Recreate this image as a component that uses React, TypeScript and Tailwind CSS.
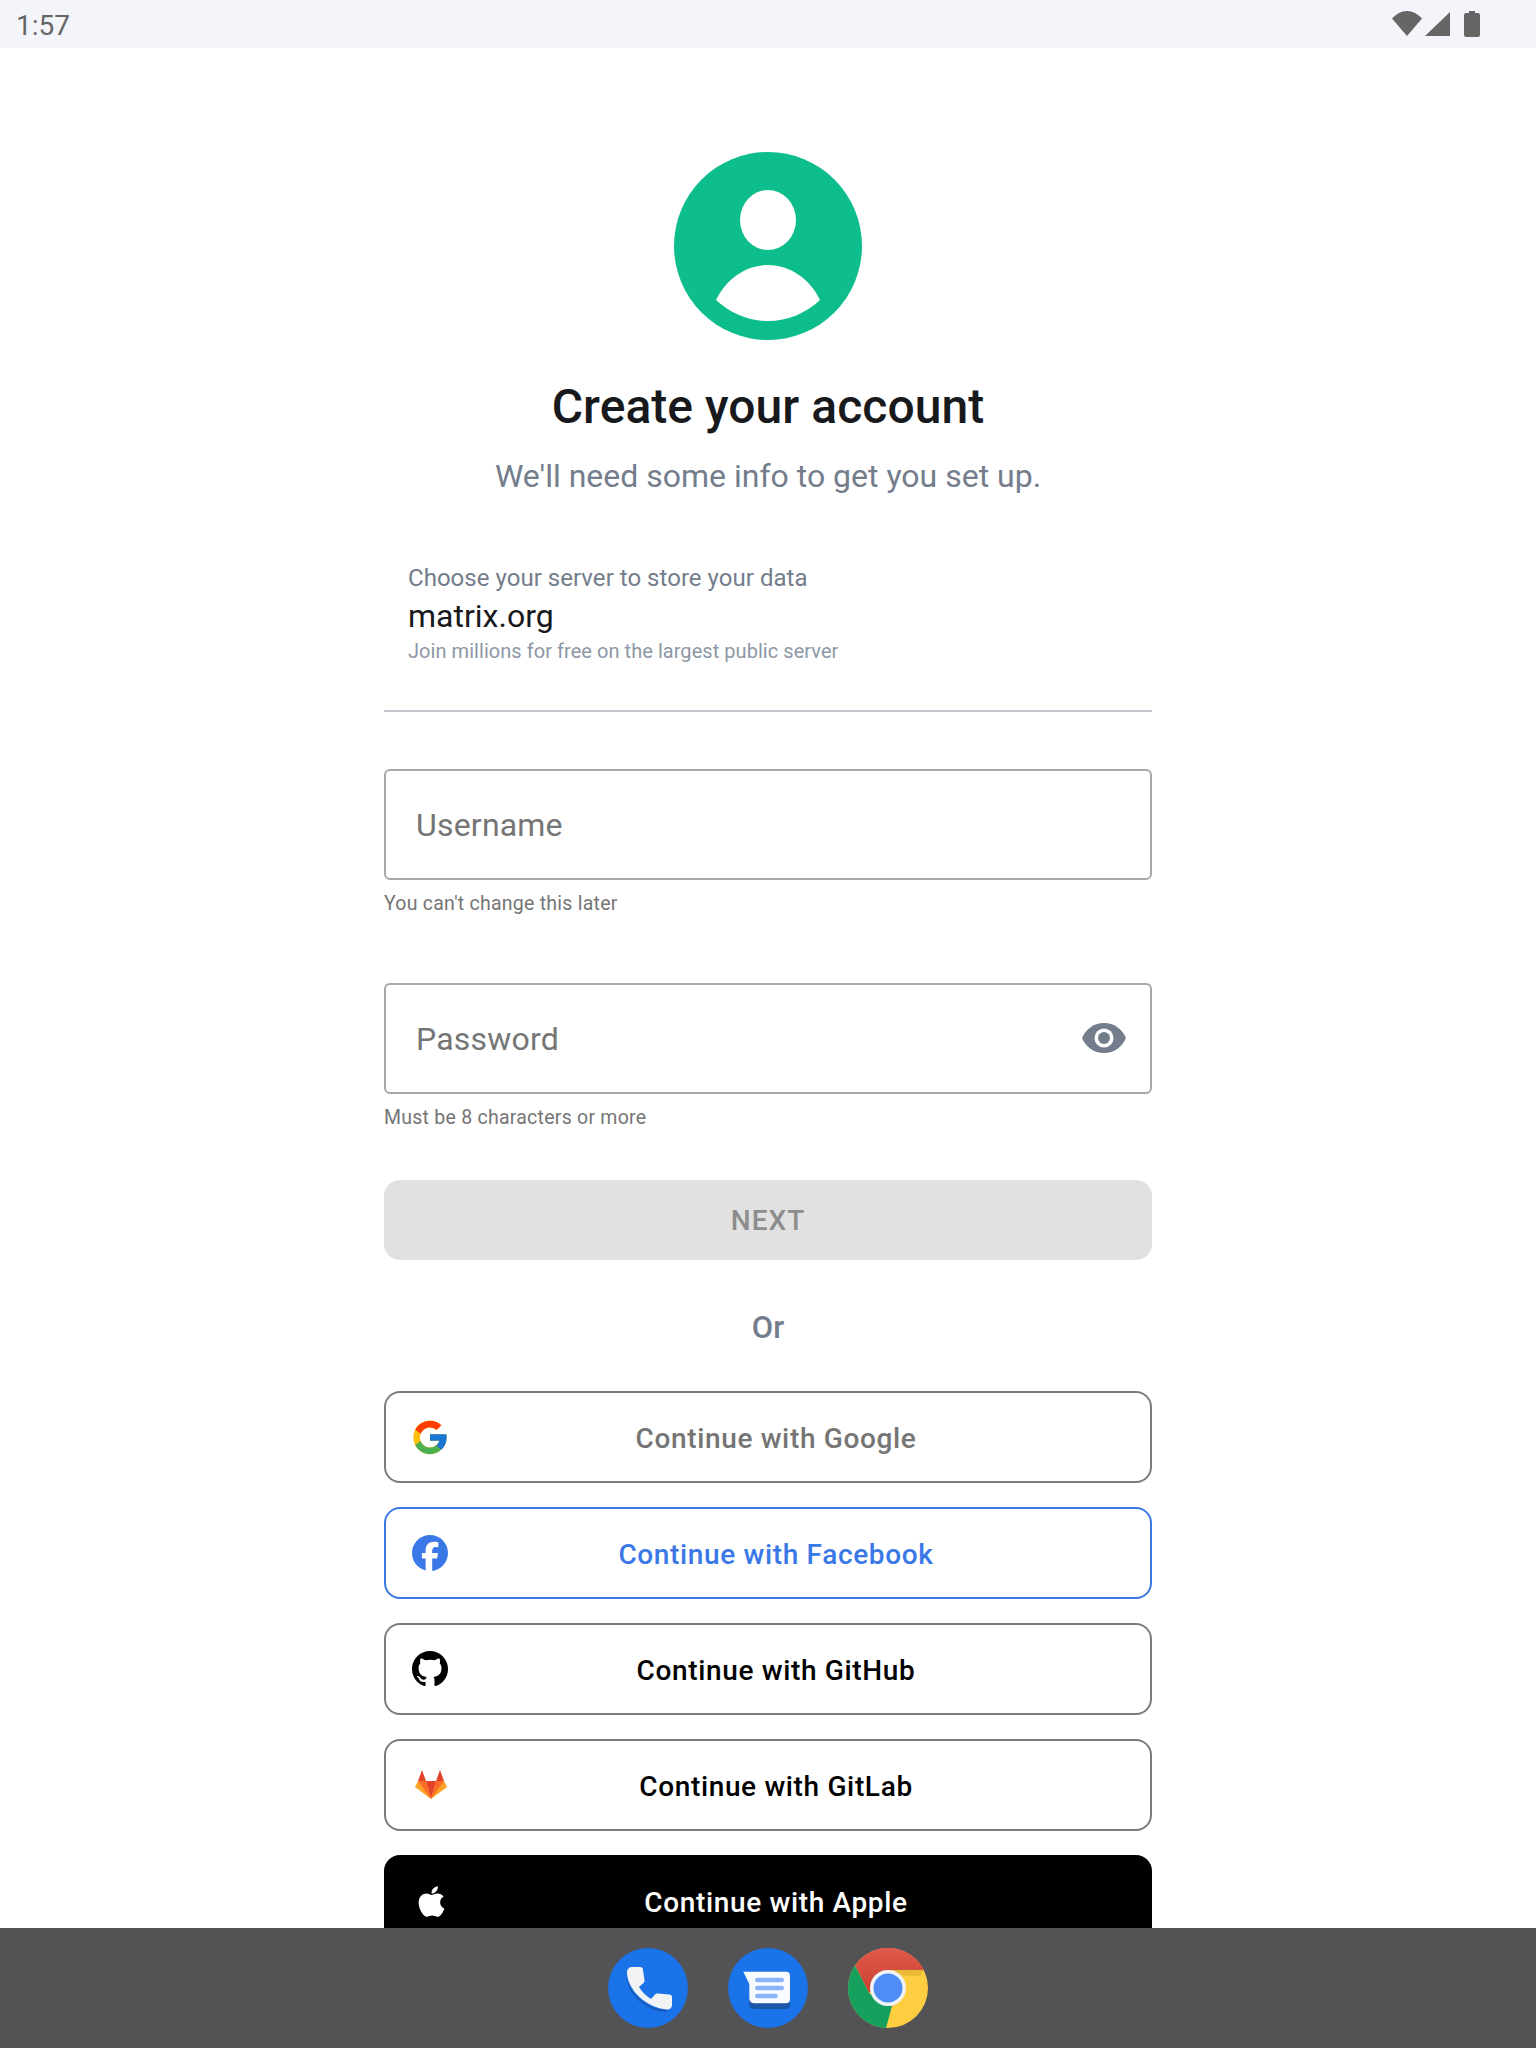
import { FaApple } from "react-icons/fa";
import { FcGoogle } from "react-icons/fc";
import { SiFacebook } from "react-icons/si";

function StatusBar() {
  return (
    <div className="flex h-[48px] shrink-0 items-center justify-between bg-[#f4f5fa] pl-[16px] pr-[56px] text-[#666666]">
      <span className="mt-[3px] text-[28px] leading-[45px]">1:57</span>
      <svg width="88" height="26" viewBox="0 0 88 26" fill="currentColor">
        <path d="M0 7.5C4 3 9.5 0 15 0s11 3 15 7.5L15 25Z" />
        <path d="M33 25 58 1v24Z" />
        <path d="M72 4a2 2 0 0 1 2-2h3V0h6v2h3a2 2 0 0 1 2 2v20a2 2 0 0 1-2 2H74a2 2 0 0 1-2-2Z" />
      </svg>
    </div>
  );
}

function Avatar() {
  return (
    <svg width="188" height="188" viewBox="0 0 188 188" className="shrink-0">
      <circle cx="94" cy="94" r="94" fill="#0dbd8b" />
      <ellipse cx="94" cy="68" rx="28" ry="30" fill="#fff" />
      <path d="M42 148C52 127 72 113 94 113s42 14 52 35c-14 13-32 21-52 21s-38-8-52-21Z" fill="#fff" />
    </svg>
  );
}

function GithubLogo() {
  return (
    <svg width="36" height="36" viewBox="0 0 16 16" fill="#000">
      <path d="M8 0C3.58 0 0 3.58 0 8c0 3.54 2.29 6.53 5.47 7.59.4.07.55-.17.55-.38 0-.19-.01-.82-.01-1.49-2.01.37-2.53-.49-2.69-.94-.09-.23-.48-.94-.82-1.13-.28-.15-.68-.52-.01-.53.63-.01 1.08.58 1.23.82.72 1.21 1.87.87 2.33.66.07-.52.28-.87.51-1.07-1.78-.2-3.64-.89-3.64-3.95 0-.87.31-1.59.82-2.15-.08-.2-.36-1.02.08-2.12 0 0 .67-.21 2.2.82.64-.18 1.32-.27 2-.27.68 0 1.36.09 2 .27 1.53-1.04 2.2-.82 2.2-.82.44 1.1.16 1.92.08 2.12.51.56.82 1.27.82 2.15 0 3.07-1.87 3.75-3.65 3.95.29.25.54.73.54 1.48 0 1.07-.01 1.93-.01 2.2 0 .21.15.46.55.38A8.013 8.013 0 0016 8c0-4.42-3.58-8-8-8z" />
    </svg>
  );
}

function GitlabLogo() {
  return (
    <svg width="32" height="30" viewBox="0 0 32 30" className="ml-[2px]">
      <path d="M16 29 0 17l3-6h8l5 18Z" fill="#fca326" />
      <path d="M16 29 32 17l-3-6h-8l-5 18Z" fill="#fca326" />
      <path d="M16 29 3 11h8l5 18Z" fill="#fc6d26" />
      <path d="M16 29 29 11h-8l-5 18Z" fill="#fc6d26" />
      <path d="M16 29 11 11h10l-5 18Z" fill="#e24329" />
      <path d="M3 11 7 0l4 11H3Z" fill="#e24329" />
      <path d="M29 11 25 0l-4 11h8Z" fill="#e24329" />
    </svg>
  );
}

function EyeIcon() {
  return (
    <svg width="44" height="30" viewBox="0 0 44 30" className="mb-[2px]">
      <path d="M22 0C12 0 4 6 0 15c4 9 12 15 22 15s18-6 22-15C40 6 32 0 22 0Z" fill="#737d8c" />
      <circle cx="22" cy="15" r="9.5" fill="#fff" />
      <circle cx="22" cy="15" r="6" fill="#737d8c" />
    </svg>
  );
}

function TextField({ label, helper, icon }: { label: string; helper: string; icon?: boolean }) {
  return (
    <div>
      <div className="flex h-[111px] items-center justify-between rounded-[6px] border-2 border-[#a8a8a8] pl-[30px] pr-[24px]">
        <span className="text-[32px] tracking-[0.2px] text-[#757575]">{label}</span>
        {icon && <EyeIcon />}
      </div>
      <p className="mt-[12px] text-[19.5px] leading-[24px] tracking-[0.25px] text-[#757575]">{helper}</p>
    </div>
  );
}

const providerBtn = "relative flex h-[92px] items-center justify-center rounded-[16px] border-2 text-[28px] font-medium tracking-[0.65px]";

function ProviderButton({ label, icon, className }: { label: string; icon: React.ReactNode; className: string }) {
  return (
    <div className={`${providerBtn} ${className}`}>
      <span className="absolute left-[24px] top-1/2 flex h-[40px] w-[40px] -translate-y-1/2 items-center justify-center">{icon}</span>
      <span className="pl-[16px] pt-[3px]">{label}</span>
    </div>
  );
}

function PhoneIcon() {
  const handset = "M19 24a5 5 0 0 1 5-5h8a3 3 0 0 1 3 3l1.500 10a3 3 0 0 1-1 3l-4.500 4c3 5 7 9 12 12l4-4.500a3 3 0 0 1 3-1l11 1a3 3 0 0 1 3 3v8a5 5 0 0 1-5 4C39 60 19 42 19 24Z";
  return (
    <svg width="80" height="80" viewBox="0 0 80 80">
      <circle cx="40" cy="40" r="40" fill="#1a73e8" />
      <path d="M19 26 C19 44 39 62 59 62 L59 64 C39 64 17 46 19 26Z" fill="#185abc" />
      <path d={handset} fill="#f1f3f4" />
    </svg>
  );
}

function MessagesIcon() {
  return (
    <svg width="80" height="80" viewBox="0 0 80 80">
      <circle cx="40" cy="40" r="40" fill="#1a73e8" />
      <path d="M21 40h41v17a4 4 0 0 1-4 4H26a5 5 0 0 1-5-5Z" fill="#1b56a8" />
      <path d="M21.300 36 15.300 23.700H58a4 4 0 0 1 4 4V51.300a4 4 0 0 1-4 4H26a5 5 0 0 1-4.700-4.700Z" fill="#f8fbff" />
      <rect x="27" y="29.700" width="29" height="4.600" rx="2.300" fill="#8ab4f8" />
      <rect x="27" y="37.700" width="29" height="4.600" rx="2.300" fill="#8ab4f8" />
      <rect x="27" y="45.700" width="22.700" height="4.600" rx="2.300" fill="#8ab4f8" />
    </svg>
  );
}

function ChromeIcon() {
  return (
    <svg width="80" height="80" viewBox="0 0 80 80">
      <defs>
        <linearGradient id="chrome-red" x1="0" y1="0" x2="0" y2="1">
          <stop offset="0" stopColor="#e05a4d" />
          <stop offset="1" stopColor="#c9402f" />
        </linearGradient>
      </defs>
      <circle cx="40" cy="40" r="40" fill="#ffcd40" />
      <path d="M40 22H76L72 28 46 27Z" fill="#eab935" />
      <path d="M7 17.500A40 40 0 0 1 76 22H40L21 45Z" fill="url(#chrome-red)" />
      <path d="M7 17.500 21 45 44 58 38 80A40 40 0 0 1 7 17.500Z" fill="#16a05d" />
      <circle cx="40" cy="40" r="18" fill="#f1f3f4" />
      <circle cx="40" cy="40" r="14.500" fill="#4e8df5" />
    </svg>
  );
}

export default function App() {
  return (
    <div className="flex h-[2048px] flex-col overflow-hidden bg-white font-['Roboto',sans-serif]">
      <StatusBar />
      <main className="flex min-h-0 flex-1 flex-col items-center overflow-hidden pt-[104px]">
        <Avatar />
        <h1 className="mt-[39px] text-[48px] leading-[56px] font-medium tracking-[0.05px] text-[#17191c]">Create your account</h1>
        <p className="mt-[21px] text-[32px] leading-[40px] text-[#737d8c]">We'll need some info to get you set up.</p>

        <div className="mt-[66px] w-[768px] shrink-0">
          <div className="border-b-2 border-[#c1c6cd] pb-[46px] pl-[24px]">
            <p className="text-[24px] leading-[32px] tracking-[0.03px] text-[#737d8c]">Choose your server to store your data</p>
            <p className="mt-[1px] text-[32px] leading-[42px] text-[#17191c]">matrix.org</p>
            <p className="mt-[1px] text-[20px] leading-[26px] tracking-[0.05px] text-[#8d97a5]">Join millions for free on the largest public server</p>
          </div>

          <div className="mt-[57px]">
            <TextField label="Username" helper="You can't change this later" />
          </div>
          <div className="mt-[67px]">
            <TextField label="Password" helper="Must be 8 characters or more" icon />
          </div>

          <div className="mt-[50px] flex h-[80px] items-center justify-center rounded-[16px] bg-[#e1e1e1] pt-[2px] text-[28px] font-medium tracking-[1px] text-[#8d8d8d]">NEXT</div>

          <p className="mt-[49px] text-center text-[31px] leading-[38px] font-medium text-[#737d8c]">Or</p>

          <div className="mt-[44px] flex flex-col gap-[24px]">
            <ProviderButton label="Continue with Google" icon={<FcGoogle size={43} />} className="border-[#7b7b7b] text-[#757575]" />
            <ProviderButton label="Continue with Facebook" icon={<SiFacebook size={36} color="#3b78e7" />} className="border-[#3b78e7] text-[#3b78e7]" />
            <ProviderButton label="Continue with GitHub" icon={<GithubLogo />} className="border-[#7b7b7b] text-black" />
            <ProviderButton label="Continue with GitLab" icon={<GitlabLogo />} className="border-[#7b7b7b] text-black" />
            <ProviderButton label="Continue with Apple" icon={<FaApple size={35} color="#fff" className="ml-[3px]" />} className="border-black bg-black text-white" />
          </div>
        </div>
      </main>
      <nav className="flex h-[120px] shrink-0 items-center justify-center gap-[40px] bg-[#535356]">
        <PhoneIcon />
        <MessagesIcon />
        <ChromeIcon />
      </nav>
    </div>
  );
}
